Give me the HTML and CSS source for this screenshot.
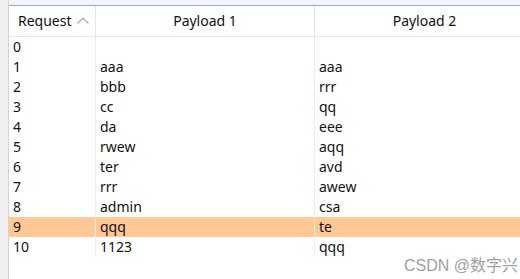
FILE: index.html
```html
<!DOCTYPE html>
<html lang="en">
<head>
    <meta charset="UTF-8">
    <title>Intruder Results</title>
    <link rel="stylesheet" href="styles.css">
</head>
<body>
    <div class="frame">
        <div class="side-strip"></div>
        <div class="main">
            <div class="top-strip"></div>
            <div class="results">
                <div class="head-cell head-left">Request
                    <svg class="sort-arrow" width="12" height="7" viewBox="0 0 12 7"><polyline points="0.5,6.5 6,1 11.5,6.5" fill="none" stroke="#a8a8a8" stroke-width="1.2"/></svg>
                </div>
                <div class="head-cell">Payload 1</div>
                <div class="head-cell">Payload 2</div>

                <div class="cell">0</div><div class="cell"></div><div class="cell"></div>
                <div class="cell">1</div><div class="cell">aaa</div><div class="cell">aaa</div>
                <div class="cell">2</div><div class="cell">bbb</div><div class="cell">rrr</div>
                <div class="cell">3</div><div class="cell">cc</div><div class="cell">qq</div>
                <div class="cell">4</div><div class="cell">da</div><div class="cell">eee</div>
                <div class="cell">5</div><div class="cell">rwew</div><div class="cell">aqq</div>
                <div class="cell">6</div><div class="cell">ter</div><div class="cell">avd</div>
                <div class="cell">7</div><div class="cell">rrr</div><div class="cell">awew</div>
                <div class="cell">8</div><div class="cell">admin</div><div class="cell">csa</div>
                <div class="cell selected">9</div><div class="cell selected">qqq</div><div class="cell selected">te</div>
                <div class="cell">10</div><div class="cell">1123</div><div class="cell">qqq</div>
            </div>
        </div>
    </div>
    <div class="watermark">CSDN @数字兴</div>
</body>
</html>
```
FILE: styles.css
```css
body {
    margin: 0;
    background: #ffffff;
    font-family: "Noto Sans", "Noto Sans CJK SC", sans-serif;
    font-size: 14px;
    color: #111111;
    overflow: hidden;
}
.frame {
    display: flex;
    height: 279px;
}
.side-strip {
    width: 8px;
    flex-shrink: 0;
    background-color: #f0f0f0;
    border-right: 1px solid #d4d4d4;
}
.main {
    flex: 1;
    min-width: 0;
}
.top-strip {
    height: 5px;
    background-color: #f5f5f5;
    border-bottom: 1px solid #8fb0da;
}
.results {
    display: grid;
    grid-template-columns: 87px 219px 220px;
    width: 526px;
}
.head-cell {
    height: 30px;
    line-height: 30px;
    text-align: center;
    border-right: 1px solid #e6e6e6;
    border-bottom: 1px solid #e6e6e6;
    box-sizing: content-box;
    white-space: nowrap;
}
.head-left {
    text-align: left;
    padding-left: 9px;
    display: flex;
    align-items: center;
    gap: 5px;
    border-right: 1px solid #e6e6e6;
}
.sort-arrow {
    margin-top: -2px;
}
.cell {
    height: 20px;
    line-height: 20px;
    padding-left: 4px;
    border-right: 1px solid #ececec;
    white-space: nowrap;
}
.selected {
    background-color: #ffc896;
}
.watermark {
    position: absolute;
    left: 404px;
    top: 252px;
    font-family: "Liberation Sans", "Noto Sans CJK SC", sans-serif;
    font-size: 16px;
    color: #a0a0a0;
}
```
